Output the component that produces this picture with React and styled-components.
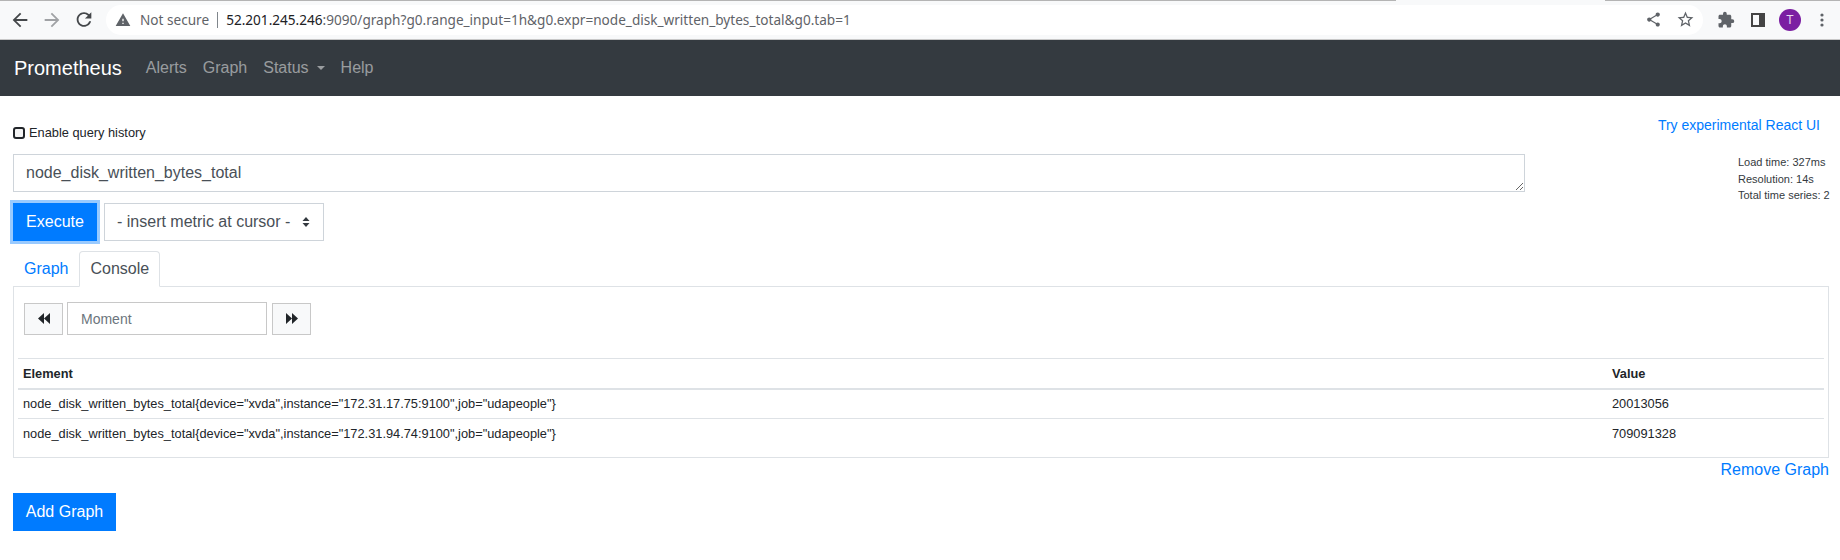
import React from 'react';
import styled, { createGlobalStyle } from 'styled-components';
import { MdArrowBack, MdArrowForward, MdRefresh, MdWarning, MdShare, MdStarBorder, MdExtension } from 'react-icons/md';

const GlobalStyle = createGlobalStyle`
  html, body {
    margin: 0;
    padding: 0;
    background: #fff;
  }
  * {
    box-sizing: border-box;
  }
  body {
    font-family: "Liberation Sans", Arial, sans-serif;
    color: #212529;
    overflow: hidden;
  }
`;

const rows = [
  { element: 'node_disk_written_bytes_total{device="xvda",instance="172.31.17.75:9100",job="udapeople"}', value: '20013056' },
  { element: 'node_disk_written_bytes_total{device="xvda",instance="172.31.94.74:9100",job="udapeople"}', value: '709091328' },
];

const App = () => {
  return (
    <>
      <GlobalStyle />
      <BrowserBar>
        <NavIcons>
          <ToolIcon><MdArrowBack size={22} /></ToolIcon>
          <ToolIcon $muted><MdArrowForward size={22} /></ToolIcon>
          <ToolIcon><MdRefresh size={23} /></ToolIcon>
        </NavIcons>
        <Omnibox>
          <MdWarning size={16} color="#5f6368" />
          <NotSecure>Not secure</NotSecure>
          <UrlDivider />
          <Url>
            <strong>52.201.245.246</strong>:9090/graph?g0.range_input=1h&amp;g0.expr=node_disk_written_bytes_total&amp;g0.tab=1
          </Url>
          <OmniActions>
            <MdShare size={17} color="#5f6368" />
            <MdStarBorder size={19} color="#5f6368" />
          </OmniActions>
        </Omnibox>
        <BrowserActions>
          <MdExtension size={18} color="#5f6368" />
          <svg width="14" height="14" viewBox="0 0 14 14">
            <path fill="#444" fillRule="evenodd" d="M0 0h14v14H0zM2 2v10h6V2z" />
          </svg>
          <Avatar>T</Avatar>
          <svg width="4" height="14" viewBox="0 0 4 14">
            <circle cx="2" cy="2" r="1.6" fill="#5f6368" />
            <circle cx="2" cy="7" r="1.6" fill="#5f6368" />
            <circle cx="2" cy="12" r="1.6" fill="#5f6368" />
          </svg>
        </BrowserActions>
      </BrowserBar>
      <Navbar>
        <Brand>Prometheus</Brand>
        <NavLink>Alerts</NavLink>
        <NavLink>Graph</NavLink>
        <NavLink>Status<Caret /></NavLink>
        <NavLink>Help</NavLink>
      </Navbar>
      <Main>
        <TopRow>
          <HistoryLabel>
            <HistoryCheck type="checkbox" />
            Enable query history
          </HistoryLabel>
          <ReactLink>Try experimental React UI</ReactLink>
        </TopRow>
        <QuerySection>
          <QueryColumn>
            <QueryInput defaultValue="node_disk_written_bytes_total" />
            <ControlRow>
              <ExecuteButton>Execute</ExecuteButton>
              <MetricSelect>
                - insert metric at cursor -
                <svg width="8" height="10" viewBox="0 0 8 10">
                  <path fill="#343a40" d="M4 0l3.5 4h-7zM4 10L.5 6h7z" />
                </svg>
              </MetricSelect>
            </ControlRow>
          </QueryColumn>
          <Stats>
            <div>Load time: 327ms</div>
            <div>Resolution: 14s</div>
            <div>Total time series: 2</div>
          </Stats>
        </QuerySection>
        <Tabs>
          <Tab>Graph</Tab>
          <Tab $active>Console</Tab>
        </Tabs>
        <Panel>
          <MomentRow>
            <MomentButton>
              <svg width="12" height="11" viewBox="0 0 12 11">
                <path fill="#212529" d="M0 5.5L6 0v11zM6 5.5L12 0v11z" />
              </svg>
            </MomentButton>
            <MomentInput placeholder="Moment" />
            <MomentButton>
              <svg width="12" height="11" viewBox="0 0 12 11">
                <path fill="#212529" d="M12 5.5L6 0v11zM6 5.5L0 0v11z" />
              </svg>
            </MomentButton>
          </MomentRow>
          <ResultTable>
            <thead>
              <tr>
                <HeadCell>Element</HeadCell>
                <HeadCell $value>Value</HeadCell>
              </tr>
            </thead>
            <tbody>
              {rows.map((row) => (
                <tr key={row.value}>
                  <BodyCell>{row.element}</BodyCell>
                  <BodyCell $value>{row.value}</BodyCell>
                </tr>
              ))}
            </tbody>
          </ResultTable>
        </Panel>
        <RemoveRow>
          <RemoveLink>Remove Graph</RemoveLink>
        </RemoveRow>
        <AddButton>Add Graph</AddButton>
      </Main>
    </>
  );
};

export default App;

const BrowserBar = styled.div`
  height: 40px;
  display: flex;
  align-items: center;
  background:
    linear-gradient(to right, #b4b4b4 1396px, #f8f9fa 1396px, #f8f9fa 1605px, #b4b4b4 1605px) top / 100% 1px no-repeat,
    #f8f9fa;
  border-bottom: 1px solid #c8c8c8;
  padding-right: 16px;
`;

const NavIcons = styled.div`
  display: flex;
  align-items: center;
  gap: 10px;
  padding-left: 9px;
  width: 106px;
`;

const ToolIcon = styled.span`
  display: flex;
  width: 22px;
  justify-content: center;
  color: ${({ $muted }) => ($muted ? '#a0a2a5' : '#44474a')};
`;

const Omnibox = styled.div`
  flex: 1;
  height: 30px;
  display: flex;
  align-items: center;
  background: #fff;
  border-radius: 15px;
  padding: 0 8px 0 9px;
`;

const NotSecure = styled.span`
  margin-left: 9px;
  font: 13.6px "Noto Sans", sans-serif;
  color: #5f6368;
  white-space: nowrap;
`;

const UrlDivider = styled.span`
  width: 1px;
  height: 16px;
  background: #80868b;
  margin: 0 8px 0 8px;
`;

const Url = styled.span`
  flex: 1;
  font: 13.6px "Noto Sans", sans-serif;
  color: #5f6368;
  white-space: nowrap;
  strong {
    font-weight: 400;
    color: #202124;
  }
`;

const OmniActions = styled.div`
  display: flex;
  align-items: center;
  gap: 14px;
`;

const BrowserActions = styled.div`
  display: flex;
  align-items: center;
  gap: 16px;
  margin-left: 14px;
`;

const Avatar = styled.span`
  width: 22px;
  height: 22px;
  margin: 0 3px 0 -2px;
  border-radius: 50%;
  background: #7b1fa2;
  color: #e8d8f0;
  font-size: 12px;
  display: flex;
  align-items: center;
  justify-content: center;
`;

const Navbar = styled.nav`
  height: 56px;
  display: flex;
  align-items: center;
  background: #343a40;
  padding: 0 14px;
`;

const Brand = styled.a`
  font-size: 20px;
  color: #fff;
  margin-right: 16px;
`;

const NavLink = styled.a`
  font-size: 16px;
  color: rgba(255, 255, 255, 0.5);
  padding: 0 8px;
`;

const Caret = styled.span`
  display: inline-block;
  margin-left: 8px;
  vertical-align: 3px;
  border-top: 4.8px solid;
  border-left: 4.8px solid transparent;
  border-right: 4.8px solid transparent;
`;

const Main = styled.main`
  padding: 21px 11px 0 13px;
`;

const TopRow = styled.div`
  display: flex;
  justify-content: space-between;
  align-items: flex-start;
  height: 37px;
  padding-right: 9px;
`;

const HistoryLabel = styled.label`
  display: flex;
  align-items: center;
  font-size: 12.8px;
  line-height: 20px;
  margin-top: 6px;
`;

const HistoryCheck = styled.input`
  appearance: none;
  width: 12px;
  height: 12px;
  margin: 0 4px 0 0;
  border: 2px solid #212529;
  border-radius: 3px;
  background: #f4f4f4;
`;

const ReactLink = styled.a`
  font-size: 14px;
  line-height: 21px;
  margin-top: -2px;
  color: #007bff;
`;

const QuerySection = styled.div`
  display: flex;
  justify-content: space-between;
  align-items: flex-start;
`;

const QueryColumn = styled.div`
  width: 1512px;
`;

const QueryInput = styled.textarea`
  display: block;
  width: 100%;
  height: 38px;
  padding: 6px 12px;
  font: 16px/24px "Liberation Sans", sans-serif;
  color: #495057;
  border: 1px solid #ced4da;
  outline: none;
`;

const ControlRow = styled.div`
  display: flex;
  gap: 7px;
  margin-top: 11px;
`;

const ExecuteButton = styled.button`
  width: 84px;
  height: 38px;
  border: 1px solid #007bff;
  background: #007bff;
  color: #fff;
  font: 16px "Liberation Sans", sans-serif;
  box-shadow: 0 0 0 3px rgba(0, 123, 255, 0.4);
`;

const MetricSelect = styled.div`
  width: 220px;
  height: 38px;
  display: flex;
  align-items: center;
  justify-content: space-between;
  padding: 0 13px 0 12px;
  border: 1px solid #ced4da;
  font-size: 16px;
  color: #495057;
`;

const Stats = styled.div`
  width: 91px;
  font-size: 11px;
  line-height: 16.5px;
  color: #343a40;
  white-space: nowrap;
`;

const Tabs = styled.div`
  display: flex;
  margin-top: 10px;
  position: relative;
  z-index: 1;
  margin-bottom: -1px;
`;

const Tab = styled.a`
  height: 36px;
  padding: 5px 10px;
  font-size: 16px;
  line-height: 24px;
  color: ${({ $active }) => ($active ? '#495057' : '#007bff')};
  background: ${({ $active }) => ($active ? '#fff' : 'transparent')};
  border: 1px solid ${({ $active }) => ($active ? '#dee2e6' : 'transparent')};
  border-bottom-color: ${({ $active }) => ($active ? '#fff' : 'transparent')};
  border-radius: 4px 4px 0 0;
`;

const Panel = styled.section`
  height: 172px;
  border: 1px solid #dee2e6;
  padding: 15px 4px 0;
`;

const MomentRow = styled.div`
  display: flex;
  align-items: center;
  gap: 4px;
  padding-left: 6px;
`;

const MomentButton = styled.button`
  width: 39px;
  height: 32px;
  display: flex;
  align-items: center;
  justify-content: center;
  background: #f8f9fa;
  border: 1px solid #c8c8c8;
  color: #212529;
  padding: 0;
`;

const MomentInput = styled.input`
  width: 200px;
  height: 33px;
  margin-right: 1px;
  padding: 0 13px;
  font: 14px "Liberation Sans", sans-serif;
  border: 1px solid #c8c8c8;
  outline: none;
  &::placeholder {
    color: #6c757d;
  }
`;

const ResultTable = styled.table`
  width: 100%;
  margin-top: 23px;
  border-collapse: collapse;
  table-layout: fixed;
  font-size: 12.8px;
`;

const HeadCell = styled.th`
  height: 30px;
  padding: 0 5px;
  text-align: left;
  font-weight: 700;
  border-top: 1px solid #dee2e6;
  border-bottom: 2px solid #dee2e6;
  width: ${({ $value }) => ($value ? '217px' : 'auto')};
`;

const BodyCell = styled.td`
  height: 30px;
  padding: 0 5px;
  border-bottom: 1px solid #dee2e6;
  tr:last-child & {
    border-bottom: none;
  }
`;

const RemoveRow = styled.div`
  display: flex;
  justify-content: flex-end;
  height: 35px;
`;

const RemoveLink = styled.a`
  font-size: 16px;
  line-height: 24px;
  color: #007bff;
`;

const AddButton = styled.button`
  display: block;
  width: 103px;
  height: 38px;
  padding: 0;
  border: none;
  background: #007bff;
  color: #fff;
  white-space: nowrap;
  font: 16px "Liberation Sans", sans-serif;
`;
